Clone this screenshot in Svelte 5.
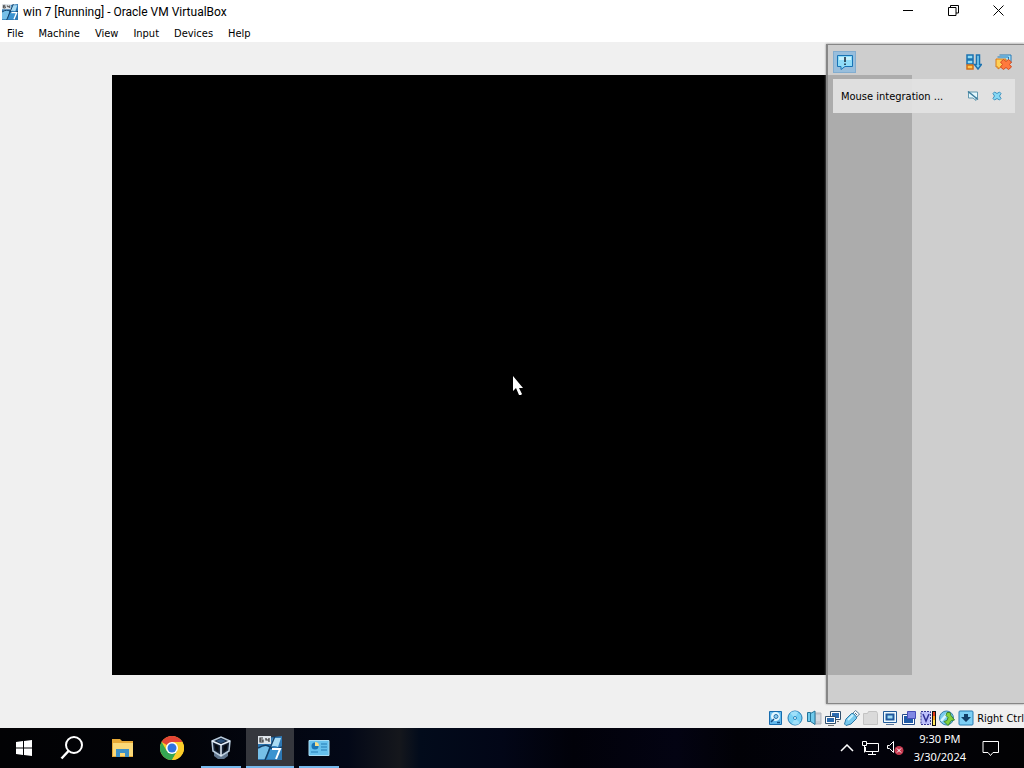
<script lang="ts">
  const menus = ['File', 'Machine', 'View', 'Input', 'Devices', 'Help'];

  let pointerX = $state(50);
  let pointerY = $state(50);
  let panelOpen = $state(true);
</script>

{#snippet win7Icon()}
  <svg width="16" height="16" viewBox="0 0 24 24" aria-hidden="true">
    <path d="M0 3L24 0v24H0z" fill="#2d78b4" />
    <path d="M0 11Q6 8 11 11L8 23H0z" fill="#76bfe8" />
    <path d="M15 2h8l-3 9q-4-2-8 0z" fill="#a9dcf4" />
    <path d="M12 13q4-3 10 0l-3 10H9z" fill="#3b93d0" />
    <path d="M17 0L7 24M0 12Q8 7 12 11t12 0" fill="none" stroke="#123f68" stroke-width="1.500" />
    <rect width="13" height="8" fill="#dfe5ea" />
    <path d="M5 2H2v4h3V4H2m6-2v2h3m0-2v4" fill="none" stroke="#333" stroke-width="1.200" />
    <path d="M14 13h8l-4 10" fill="none" stroke="#fff" stroke-width="2" />
  </svg>
{/snippet}

<div class="desktop">
  <header class="titlebar">
    <span class="app-icon">{@render win7Icon()}</span>
    <h1>win 7 [Running] - Oracle VM VirtualBox</h1>
    <div class="window-buttons">
      <button aria-label="Minimize">
        <svg width="11" height="11" viewBox="0 0 11 11"><path d="M0 5.500h10" /></svg>
      </button>
      <button aria-label="Restore">
        <svg width="11" height="11" viewBox="0 0 11 11"><path d="M.5 2.500h7.500v8H.5zM2.500 2.500V.5h8v7.500H8" /></svg>
      </button>
      <button aria-label="Close">
        <svg width="11" height="11" viewBox="0 0 11 11"><path d="M.5.5l10 10M10.500.5l-10 10" /></svg>
      </button>
    </div>
  </header>

  <nav class="menubar" aria-label="Menu">
    {#each menus as menu}
      <button>{menu}</button>
    {/each}
  </nav>

  <main class="workspace">
    <div class="guest">
      <svg class="pointer" style="left: {pointerX}%; top: {pointerY}%" width="12" height="20" viewBox="0 0 12 20" aria-hidden="true">
        <path d="M1 1v15l3-3 3 7h2l1-1-3-6h4z" fill="#fff" />
      </svg>
    </div>

    <aside class="panel" aria-label="Notifications">
      <div class="panel-tools">
        <button class="toggle" aria-label="Toggle notifications" aria-pressed={panelOpen} onclick={() => (panelOpen = !panelOpen)}>
          <svg width="18" height="18" viewBox="0 0 18 18">
            <path d="M1.500 2.500h15v11H9l-4 3v-3H1.500z" fill="#8fdcf8" stroke="#1873b5" />
            <path d="M3 4h12v3H3z" fill="#c9f1fd" />
            <path d="M9 4v5m0 1.500v1.500" stroke="#123" stroke-width="1.500" />
          </svg>
        </button>
        <button class="sort" aria-label="Sort notifications">
          <svg width="16" height="16" viewBox="0 0 16 16">
            <path d="M1 1h6v4H1zM1 6h6v4H1z" fill="#8edcf7" stroke="#1b72b0" stroke-width="1.500" />
            <path d="M1 11h6v4H1z" fill="#ffc84a" stroke="#d16d18" stroke-width="1.500" />
            <path d="M10.500 1h3v9.500h2L12 15 8.500 10.500h2z" fill="#83d5f5" stroke="#1b72b0" stroke-width="1.500" />
          </svg>
        </button>
        <button aria-label="Remove finished notifications">
          <svg width="17" height="16" viewBox="0 0 17 16">
            <path d="M4.500 1h11.500v8M2.500 3h11v8" fill="#a9e3fa" stroke="#2678b4" />
            <path d="M1 5h10v8H6l-3 2v-2H1z" fill="#ffd057" stroke="#d77919" />
            <path d="M8.500 5.500L11 7.500l2.500-2 3 2.500-2 2.500 2 2.500-3 2.500-2.500-2-2.500 2-3-2.500 2-2.500-2-2.500z" fill="#ff793d" stroke="#d64c20" />
          </svg>
        </button>
      </div>
      {#if panelOpen}
        <article class="note">
          <p>Mouse integration ...</p>
          <button aria-label="Do not show again">
            <svg width="12" height="10" viewBox="0 0 12 10">
              <path d="M1.500 1h9v6H9v2.500L6 7H1.500z" fill="#e3f7fd" stroke="#6298ae" />
              <path d="M1 .5l10 8" stroke="#3a7b9b" stroke-width="1.500" />
            </svg>
          </button>
          <button aria-label="Close notification">
            <svg width="10" height="10" viewBox="0 0 10 10">
              <path d="M2.500 1L5 2.500 7.500 1 9 2.500 7.500 5 9 7.500 7.500 9 5 7.500 2.500 9 1 7.500 2.500 5 1 2.500z" fill="#86d9f5" stroke="#3e91be" />
            </svg>
          </button>
        </article>
      {/if}
    </aside>
  </main>

  <footer class="statusbar">
    <button aria-label="Hard disks">
      <svg width="16" height="16" viewBox="0 0 16 16">
        <path d="M1.500 1.500h12v13h-12z" fill="#62b8ec" stroke="#176cae" />
        <circle cx="7.500" cy="6.500" r="4.500" fill="#e1f7ff" />
        <circle cx="8" cy="6.500" r="2" fill="#8cccf0" stroke="#2871aa" />
        <path d="M3 12l3-3M9 12.500h3" stroke="#124b81" stroke-width="1.500" />
      </svg>
    </button>
    <button aria-label="Optical drives">
      <svg width="16" height="16" viewBox="0 0 16 16">
        <circle cx="8" cy="8" r="7" fill="#79d1f4" stroke="#247bb4" />
        <path d="M8 8L3 3q4-3 8-1zM8 8l5 5q-3 3-8 1z" fill="#9fe0fa" />
        <circle cx="8" cy="8" r="1.500" fill="#fff" stroke="#2384bd" />
      </svg>
    </button>
    <button aria-label="Audio">
      <svg width="16" height="16" viewBox="0 0 16 16">
        <path d="M9 3h6v11H9z" fill="#c8ccd3" stroke="#b1b5bd" />
        <path d="M10 6h4m-4 2h4m-4 2h4" stroke="#e5e7eb" />
        <path d="M1.500 2.500h3v9h-3zM4.500 3.500L9 1v13.500l-4.500-3z" fill="#71caec" stroke="#247398" />
      </svg>
    </button>
    <button aria-label="Network">
      <svg width="16" height="16" viewBox="0 0 16 16">
        <path d="M5.500 1.500h10v8h-10z" fill="#fff" stroke="#32506d" />
        <path d="M7 3h7v5H7z" fill="#2b6bb0" />
        <path d="M.5 6.500h10v7H.5z" fill="#fff" stroke="#32506d" />
        <path d="M2 8h7v4H2z" fill="#2b6bb0" />
        <path d="M3 15.500h6M12 11.500h2" stroke="#777" />
      </svg>
    </button>
    <button aria-label="USB">
      <svg width="16" height="16" viewBox="0 0 16 16">
        <path d="M8 4l3.500-3.500L15.500 4 12 8z" fill="#f5f7fa" stroke="#63839a" />
        <path d="M2 9l5.500-5.500h2L12.500 7v1.500L7 14l-5 1.500L.5 14z" fill="#76c9ee" stroke="#2e78a6" />
        <path d="M4 10l5-5" stroke="#c9f1ff" stroke-width="2" />
        <path d="M11 3l2 2" stroke="#466b82" />
      </svg>
    </button>
    <button aria-label="Shared folders" disabled>
      <svg width="16" height="16" viewBox="0 0 16 16">
        <path d="M.5 3.500h4l1-2h8l1 2v11H.5z" fill="#dadada" stroke="#c3c3c3" />
      </svg>
    </button>
    <button aria-label="Display">
      <svg width="16" height="16" viewBox="0 0 16 16">
        <path d="M1.500 1.500h13v11h-13z" fill="#eefaff" stroke="#245d9a" />
        <path d="M4.500 4.500h7v5h-7z" fill="#9ddcf5" stroke="#1f599e" stroke-width="2" />
        <path d="M4 14.500h8" stroke="#59769a" />
      </svg>
    </button>
    <button aria-label="Recording">
      <svg width="16" height="16" viewBox="0 0 16 16">
        <path d="M1.500 4.500h12v10h-12z" fill="#fff" stroke="#244b89" />
        <path d="M3 6h9v7H3z" fill="#205ba7" />
        <path d="M6.500 1.500h8v7h-8z" fill="#8188e4" stroke="#484eb8" />
      </svg>
    </button>
    <button aria-label="Virtualization features">
      <svg width="16" height="16" viewBox="0 0 16 16">
        <path d="M1 1.500h9.500v13H1z" fill="#bdc0fa" stroke="#363894" stroke-dasharray="2 1" />
        <path d="M3 4l3 7 3-7" fill="none" stroke="#303095" stroke-width="1.500" />
        <path d="M12 1h4v15h-4z" fill="#111" />
        <path d="M13 2h2v4h-2z" fill="#e23a1d" />
        <path d="M13 6h2v4h-2z" fill="#ff9c16" />
        <path d="M13 10h2v5h-2z" fill="#ffe65a" />
      </svg>
    </button>
    <button aria-label="Mouse integration">
      <svg width="16" height="16" viewBox="0 0 16 16">
        <circle cx="7.500" cy="8" r="7" fill="#78cbed" stroke="#397fa8" />
        <path d="M2 11l7-8" stroke="#d6f5ff" stroke-width="2.500" />
        <path d="M8 2.500h3l1 3 3.500 4.500-3 .5-3.500 5-4-4 3-1 1-3-2-2z" fill="#83d13c" stroke="#378331" />
      </svg>
    </button>
    <button aria-label="Keyboard">
      <svg width="16" height="16" viewBox="0 0 16 16">
        <rect x="1" y="1" width="14" height="14" rx="1" fill="#7dcff5" stroke="#297ab1" />
        <path d="M6 4h4v3h3l-5 5-5-5h3z" fill="#123e68" />
      </svg>
    </button>
    <span>Right Ctrl</span>
  </footer>

  <nav class="taskbar" aria-label="Taskbar">
    <button class="small" aria-label="Start">
      <svg width="16" height="16" viewBox="0 0 16 16" fill="#fff">
        <path d="M0 2l7-1v6.500H0zM8 1l8-1v7.500H8zM0 8.500h7V15l-7-1zM8 8.500h8V16l-8-1z" />
      </svg>
    </button>
    <button class="small" aria-label="Search">
      <svg width="24" height="24" viewBox="0 0 24 24" fill="none" stroke="#fff" stroke-width="2">
        <circle cx="14" cy="9" r="8" />
        <path d="M8.500 15L1.500 22.500" stroke-width="2.500" />
      </svg>
    </button>
    <div class="tasks">
      <button class="task" aria-label="File Explorer">
        <svg width="24" height="22" viewBox="0 0 24 22">
          <path d="M1 2h8l2 2h11v16H1z" fill="#e7a936" />
          <path d="M2 6h20v13H2z" fill="#fbd978" />
          <path d="M5 12h13v8h-4v-4H9v4H5z" fill="#3e91c7" />
        </svg>
      </button>
      <button class="task" aria-label="Google Chrome">
        <svg width="24" height="24" viewBox="0 0 24 24">
          <circle cx="12" cy="12" r="12" fill="#fbcd2a" />
          <path d="M12 12L1.600 6A12 12 0 0 1 22.400 6z" fill="#e34435" />
          <path d="M1.600 6A12 12 0 0 0 12 24l5.200-9L12 12 6.800 15z" fill="#35a653" />
          <path d="M12 6h10.400A12 12 0 0 1 12 24l5.200-9z" fill="#fbcd2a" />
          <circle cx="12" cy="12" r="6" fill="#fff" />
          <circle cx="12" cy="12" r="4.500" fill="#2f73e0" />
        </svg>
      </button>
      <button class="task running" aria-label="Oracle VM VirtualBox">
        <svg width="22" height="24" viewBox="0 0 22 24">
          <path d="M4 16l7 2 7-2v4l-4 3H8l-4-3z" fill="#60758d" />
          <path d="M2 5l9-4 9 4-1 10-8 5-8-5z" fill="#182538" stroke="#b9cbdc" stroke-width="1.500" />
          <path d="M2 5l9 4 9-4M11 9v11" fill="none" stroke="#e8f1fa" stroke-width="1.500" />
          <path d="M6 5l5-2 5 2-5 2z" fill="#294f78" />
          <path d="M4.500 8l4 2v6l-3-2zM17.500 8l-4 2v6l3-2z" fill="#05090f" />
        </svg>
      </button>
      <button class="task running active" aria-label="win 7 [Running]">
        <span class="large-icon">{@render win7Icon()}</span>
      </button>
      <button class="task running" aria-label="Control Panel">
        <svg width="22" height="18" viewBox="0 0 22 18">
          <path d="M1 1.500h20v15H1z" fill="#65c0ed" stroke="#a8dcf4" />
          <circle cx="7" cy="7" r="3.500" fill="#1975b5" />
          <path d="M7 7V3a4 4 0 0 1 4 4z" fill="#f6de8a" />
          <path d="M13 5h6m-6 3h6m-6 3h6M3 13h7" stroke="#257bb5" />
        </svg>
      </button>
    </div>

    <div class="tray">
      <button aria-label="Show hidden icons">
        <svg width="14" height="8" viewBox="0 0 14 8" fill="none" stroke="#fff" stroke-width="1.500"><path d="M1 7l6-6 6 6" /></svg>
      </button>
      <button aria-label="Network connection">
        <svg width="17" height="15" viewBox="0 0 17 15" fill="none" stroke="#fff">
          <path d="M5 2.500h11.500v8H3.500V6M.5.5h4v4h-4zM2.500 4.500v7M10.500 11v3M6 13.500h8" />
        </svg>
      </button>
      <button aria-label="Volume muted">
        <svg width="17" height="16" viewBox="0 0 17 16">
          <path d="M.5 5.500h2l4-4v11l-4-4h-2z" fill="none" stroke="#fff" />
          <circle cx="12" cy="10.500" r="4.500" fill="#c83a50" />
          <path d="M10 8.500l4 4m0-4l-4 4" stroke="#fff" />
        </svg>
      </button>
      <button class="clock">
        <time datetime="21:30">9:30 PM</time>
        <time datetime="2024-03-30">3/30/2024</time>
      </button>
      <button class="action" aria-label="Action center">
        <svg width="18" height="17" viewBox="0 0 18 17" fill="none" stroke="#fff">
          <path d="M1 1.500h15.500v11H11L8.500 15.500 6 12.500H1z" />
        </svg>
      </button>
    </div>
  </nav>
</div>

<style>
  :global(body) {
    margin: 0;
  }

  .desktop {
    display: flex;
    flex-direction: column;
    min-height: 100vh;
    background: #f0f0f0;
    color: #000;
    font-family: "DejaVu Sans Condensed", "DejaVu Sans", sans-serif;
    font-size: 11px;
  }

  button {
    display: flex;
    align-items: center;
    justify-content: center;
    padding: 0;
    border: 0;
    background: none;
    color: inherit;
    font: inherit;
  }

  svg {
    display: block;
    flex: none;
  }

  .titlebar {
    display: flex;
    align-items: center;
    height: 24px;
    padding: 0 3px 0 2px;
    background: #fff;
  }

  .titlebar h1 {
    flex: 1;
    margin: 0 0 0 5px;
    font-family: Roboto, sans-serif;
    font-size: 12px;
    font-weight: 400;
  }

  .window-buttons {
    display: flex;
    align-self: flex-start;
  }

  .window-buttons button {
    width: 45px;
    height: 21px;
  }

  .window-buttons path {
    fill: none;
    stroke: #000;
  }

  .menubar {
    display: flex;
    gap: 1px;
    height: 18px;
    background: #fff;
  }

  .menubar button {
    padding: 0 7px;
  }

  .workspace {
    position: relative;
    display: flex;
    flex: 1;
    padding: 33px 112px;
  }

  .guest {
    position: relative;
    flex: 1;
    min-height: 300px;
    background: #000;
  }

  .pointer {
    position: absolute;
  }

  .panel {
    position: absolute;
    top: 2px;
    right: 0;
    bottom: 4px;
    box-sizing: border-box;
    width: 198px;
    padding: 6px 9px 5px 5px;
    border: 2px solid #868686;
    border-width: 1px 0 1px 2px;
    background: rgba(200, 200, 200, 0.86);
    background-clip: padding-box;
    box-shadow: 0 0 2px #888;
  }

  .panel-tools {
    display: flex;
    align-items: center;
    gap: 13px;
  }

  .toggle {
    box-sizing: border-box;
    width: 23px;
    height: 22px;
    border: 1px solid #82add0;
    background: #98bedc;
  }

  .sort {
    margin-left: auto;
  }

  .panel-tools button:last-child {
    margin-right: 3px;
  }

  .note {
    display: flex;
    align-items: center;
    gap: 13px;
    height: 34px;
    margin-top: 6px;
    padding: 0 13px 0 8px;
    background: rgba(226, 226, 226, 0.95);
  }

  .note p {
    flex: 1;
    margin: 0;
    white-space: nowrap;
  }

  .statusbar {
    display: flex;
    align-items: center;
    justify-content: flex-end;
    gap: 3px;
    height: 20px;
  }

  .taskbar {
    display: flex;
    height: 40px;
    background: linear-gradient(90deg, #020204 0%, #020308 18%, #030817 34%, #15171c 39%, #020b1b 41%, #020617 49%, #010109 56%, #030312 66%, #010106 72%, #02020c 82%, #020203 100%);
    color: #fff;
  }

  .small {
    width: 48px;
  }

  .tasks {
    display: flex;
    gap: 1px;
    margin-left: 3px;
  }

  .task {
    position: relative;
    width: 48px;
  }

  .running::after {
    content: "";
    position: absolute;
    right: 4px;
    bottom: 0;
    left: 4px;
    height: 2px;
    background: #76b9ed;
  }

  .active {
    background: #35373d;
  }

  .active::after {
    right: 0;
    left: 0;
  }

  .large-icon svg {
    width: 24px;
    height: 24px;
  }

  .tray {
    display: flex;
    align-items: center;
    gap: 8px;
    margin-left: auto;
    padding-right: 24px;
  }

  .clock {
    flex-direction: column;
    align-self: stretch;
    margin-left: 2px;
    font-family: "Noto Sans", "Open Sans", sans-serif;
    font-size: 11px;
    line-height: 18px;
  }

  .action {
    margin-left: 8px;
  }
</style>
